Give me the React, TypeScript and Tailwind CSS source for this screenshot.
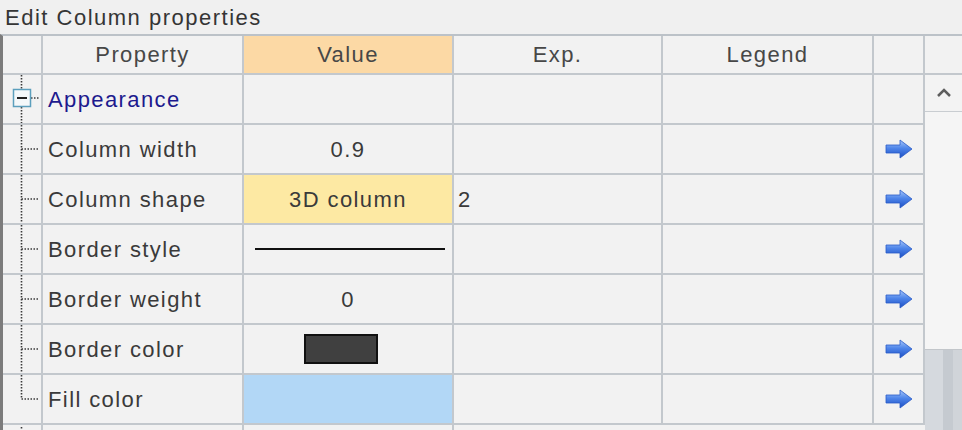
import React from 'react';

type Row = {
  name: string;
  value?: React.ReactNode;
  valueBg?: string;
  exp?: string;
  tree: 'group' | 'mid' | 'last';
  arrow?: boolean;
};

const line = 'border-r-2 border-b-2 border-[#c3c8cd]';

function TreeLines({ kind }: { kind: 'group' | 'mid' | 'last' | 'tail' }) {
  const dot = { stroke: '#3a3a3a', strokeWidth: 1.6, strokeDasharray: '1.5 1.5' };
  return (
    <svg width="38" height="48" viewBox="0 0 38 48">
      {kind === 'group' && (
        <>
          <line x1="18.5" y1="0" x2="18.5" y2="14" {...dot} />
          <line x1="18.5" y1="32" x2="18.5" y2="48" {...dot} />
          <line x1="28" y1="23" x2="36" y2="23" {...dot} />
          <rect x="10.5" y="14.5" width="17" height="17" fill="#f4f8fa" stroke="#5c9fbd" strokeWidth="1.5" />
          <line x1="14" y1="23" x2="24" y2="23" stroke="#222" strokeWidth="2" />
        </>
      )}
      {kind === 'mid' && (
        <>
          <line x1="18.5" y1="0" x2="18.5" y2="48" {...dot} />
          <line x1="18.5" y1="24" x2="36" y2="24" {...dot} />
        </>
      )}
      {kind === 'last' && (
        <>
          <line x1="18.5" y1="0" x2="18.5" y2="24" {...dot} />
          <line x1="18.5" y1="24" x2="36" y2="24" {...dot} />
        </>
      )}
      {kind === 'tail' && <line x1="18.5" y1="2" x2="18.5" y2="48" {...dot} />}
    </svg>
  );
}

function BlueArrow() {
  return (
    <svg width="28" height="20" viewBox="0 0 28 20">
      <defs>
        <linearGradient id="arr" x1="0" y1="0" x2="0" y2="1">
          <stop offset="0" stopColor="#a9c8fa" />
          <stop offset="0.45" stopColor="#4f86ea" />
          <stop offset="1" stopColor="#1c4fc4" />
        </linearGradient>
      </defs>
      <path d="M1 6 H15 V1 L27 10 L15 19 V14 H1 Z" fill="url(#arr)" stroke="#2a5bc8" strokeWidth="0.8" strokeLinejoin="round" />
    </svg>
  );
}

const rows: Row[] = [
  { name: 'Appearance', tree: 'group' },
  { name: 'Column width', value: '0.9', tree: 'mid', arrow: true },
  { name: 'Column shape', value: '3D column', valueBg: 'bg-[#fde9a3]', exp: '2', tree: 'mid', arrow: true },
  { name: 'Border style', value: <div className="ml-[4px] w-[190px] h-[2px] bg-[#111]" />, tree: 'mid', arrow: true },
  { name: 'Border weight', value: '0', tree: 'mid', arrow: true },
  {
    name: 'Border color',
    value: <div className="mr-[15px] w-[74px] h-[30px] bg-[#404040] border-2 border-[#111]" />,
    tree: 'mid',
    arrow: true,
  },
  { name: 'Fill color', valueBg: 'bg-[#b2d7f6]', tree: 'last', arrow: true },
];

export default function App() {
  return (
    <div
      className="w-[962px] h-[430px] overflow-hidden bg-[#f0f0f0] text-[#3a3a3a]"
      style={{ fontFamily: '"Liberation Sans", Arial, sans-serif' }}
    >
      <div className="h-[34px] pl-[5px] flex items-center text-[22px] tracking-[1.5px] text-[#353535]">
        Edit Column properties
      </div>
      <div className="flex border-l-[3px] border-l-[#7c7c7c] border-t-2 border-t-[#bcc2c8]">
        <div className="w-[922px] text-[22px] tracking-[1.4px]">
          {/* header */}
          <div className="flex h-[39px] bg-[#f2f2f2] text-[#474747]">
            <div className={`w-[40px] ${line}`} />
            <div className={`w-[201px] ${line} flex items-center justify-center`}>Property</div>
            <div className={`w-[210px] ${line} flex items-center justify-center bg-[#fcd9a5]`}>Value</div>
            <div className={`w-[209px] ${line} flex items-center justify-center`}>Exp.</div>
            <div className={`w-[211px] ${line} flex items-center justify-center`}>Legend</div>
            <div className={`w-[51px] ${line}`} />
          </div>
          {rows.map((r) => (
            <div key={r.name} className="flex h-[50px] bg-[#f2f2f2]">
              <div className={`w-[40px] ${line} flex items-center`}>
                <TreeLines kind={r.tree} />
              </div>
              <div
                className={`w-[201px] ${line} flex items-center pl-[5px] ${
                  r.tree === 'group' ? 'text-[#1d1a8e]' : ''
                }`}
              >
                {r.name}
              </div>
              <div className={`w-[210px] ${line} flex items-center justify-center ${r.valueBg ?? ''}`}>
                {r.value}
              </div>
              <div className={`w-[209px] ${line} flex items-center pl-[4px]`}>{r.exp}</div>
              <div className={`w-[211px] ${line}`} />
              <div className={`w-[51px] ${line} flex items-center justify-center`}>
                {r.arrow && <BlueArrow />}
              </div>
            </div>
          ))}
          <div className="flex h-[20px] bg-[#f2f2f2]">
            <div className="w-[40px] border-r-2 border-[#c3c8cd] overflow-hidden">
              <TreeLines kind="tail" />
            </div>
            <div className="w-[201px] border-r-2 border-[#c3c8cd]" />
            <div className="w-[210px] border-r-2 border-[#c3c8cd]" />
          </div>
        </div>
        {/* scrollbar */}
        <div className="w-[37px] flex flex-col">
          <div className="h-[39px] bg-[#f2f2f2] border-b-2 border-[#c3c8cd]" />
          <div className="h-[37px] bg-[#f3f3f3] border-b border-[#c9cdd1] flex items-center justify-center">
            <svg width="16" height="10" viewBox="0 0 16 10">
              <path d="M2 8 L8 2 L14 8" fill="none" stroke="#5e5e5e" strokeWidth="2.5" />
            </svg>
          </div>
          <div className="h-[238px] bg-[#f5f5f5] border-b border-[#c2c6ca]" />
          <div className="flex-1 flex bg-[#d5d9de]">
            <div className="w-[18px]" />
            <div className="w-[10px] bg-[#c5cad0]" />
            <div className="flex-1 bg-[#d0d4d9]" />
          </div>
        </div>
      </div>
    </div>
  );
}
